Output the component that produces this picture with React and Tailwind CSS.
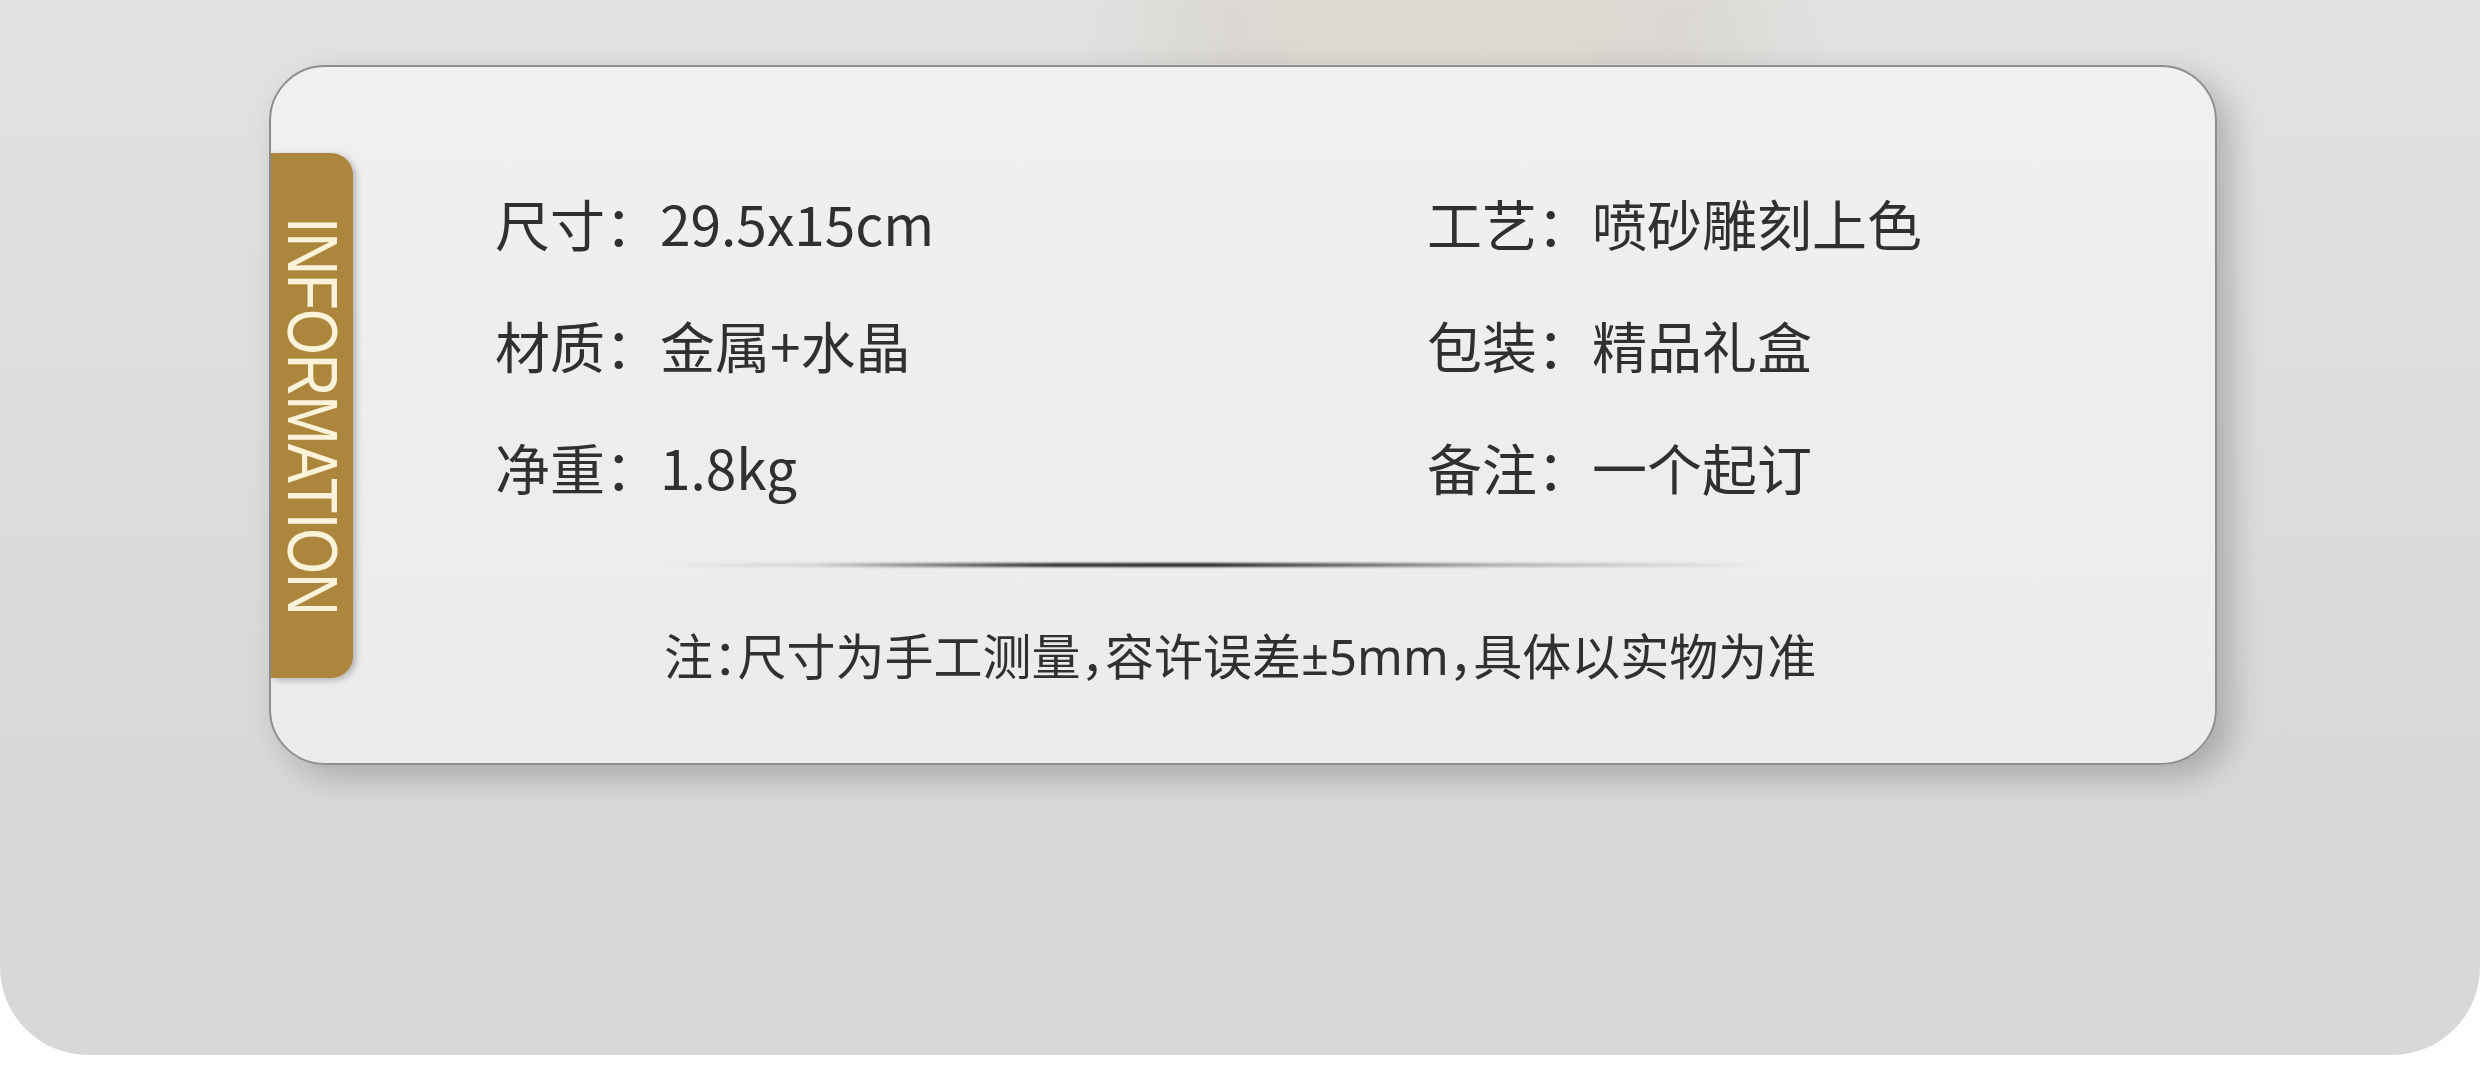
import React from "react";

const rows = [
  ["尺寸：", "29.5x15cm", "工艺：", "喷砂雕刻上色"],
  ["材质：", "金属+水晶", "包装：", "精品礼盒"],
  ["净重：", "1.8kg", "备注：", "一个起订"],
];

export default function App() {
  return (
    <div className="min-h-screen bg-white font-['Noto_Sans_CJK_SC','Noto_Sans',sans-serif]">
      <div className="relative w-full h-[1055px] rounded-b-[88px] overflow-hidden bg-[linear-gradient(180deg,#e3e2e0_0%,#dcdcdb_45%,#d8d8d8_70%,#d8d8d8_100%)]">
        <div className="absolute left-[1075px] top-0 w-[760px] h-[64px] bg-[linear-gradient(90deg,rgba(205,200,194,0),rgba(208,204,197,0.45)_20%,rgba(220,212,198,0.55)_45%,rgba(208,204,197,0.45)_80%,rgba(205,200,194,0))]" />

        {/* info card */}
        <div className="relative ml-[269px] mt-[65px] w-[1948px] h-[700px] rounded-[56px] border-2 border-[#8e8e8e] bg-[linear-gradient(180deg,#f0f0f0,#ebebeb)] shadow-[14px_12px_32px_rgba(0,0,0,0.22)]">
          <div className="absolute left-0 top-[86px] w-[82px] h-[525px] rounded-r-[22px] bg-[#ac863d] shadow-[3px_2px_6px_rgba(0,0,0,0.25)] flex items-center justify-center">
            <span className="[writing-mode:vertical-rl] text-[70px] leading-none scale-y-[0.84] text-[#fbf2da] font-['Liberation_Sans',Arial,sans-serif] tracking-[-1px]">
              INFORMATION
            </span>
          </div>

          <div className="pl-[224px] pt-[128px] grid grid-cols-[932px_1fr] gap-y-[67px] text-[55px] leading-[55px] text-[#303030]">
            {rows.map((r) => (
              <React.Fragment key={r[0]}>
                <div className="whitespace-nowrap">
                  {r[0]}
                  {r[1]}
                </div>
                <div className="whitespace-nowrap">
                  {r[2]}
                  {r[3]}
                </div>
              </React.Fragment>
            ))}
          </div>

          <div className="ml-[393px] mt-[69px] w-[1092px] h-[4px] bg-[linear-gradient(90deg,rgba(0,0,0,0)_0%,rgba(0,0,0,0.1)_14%,rgba(25,25,25,0.9)_36%,rgba(30,30,30,0.95)_50%,rgba(0,0,0,0.25)_76%,rgba(0,0,0,0)_100%)] blur-[0.8px]" />

          <div className="ml-[393px] mt-[62px] text-[49px] leading-[49px] text-[#303030] whitespace-nowrap [font-feature-settings:'halt']">
            注：尺寸为手工测量，容许误差
            <span className="font-['Noto_Sans',sans-serif]">±5mm</span>
            ，具体以实物为准
          </div>
        </div>
      </div>
    </div>
  );
}
